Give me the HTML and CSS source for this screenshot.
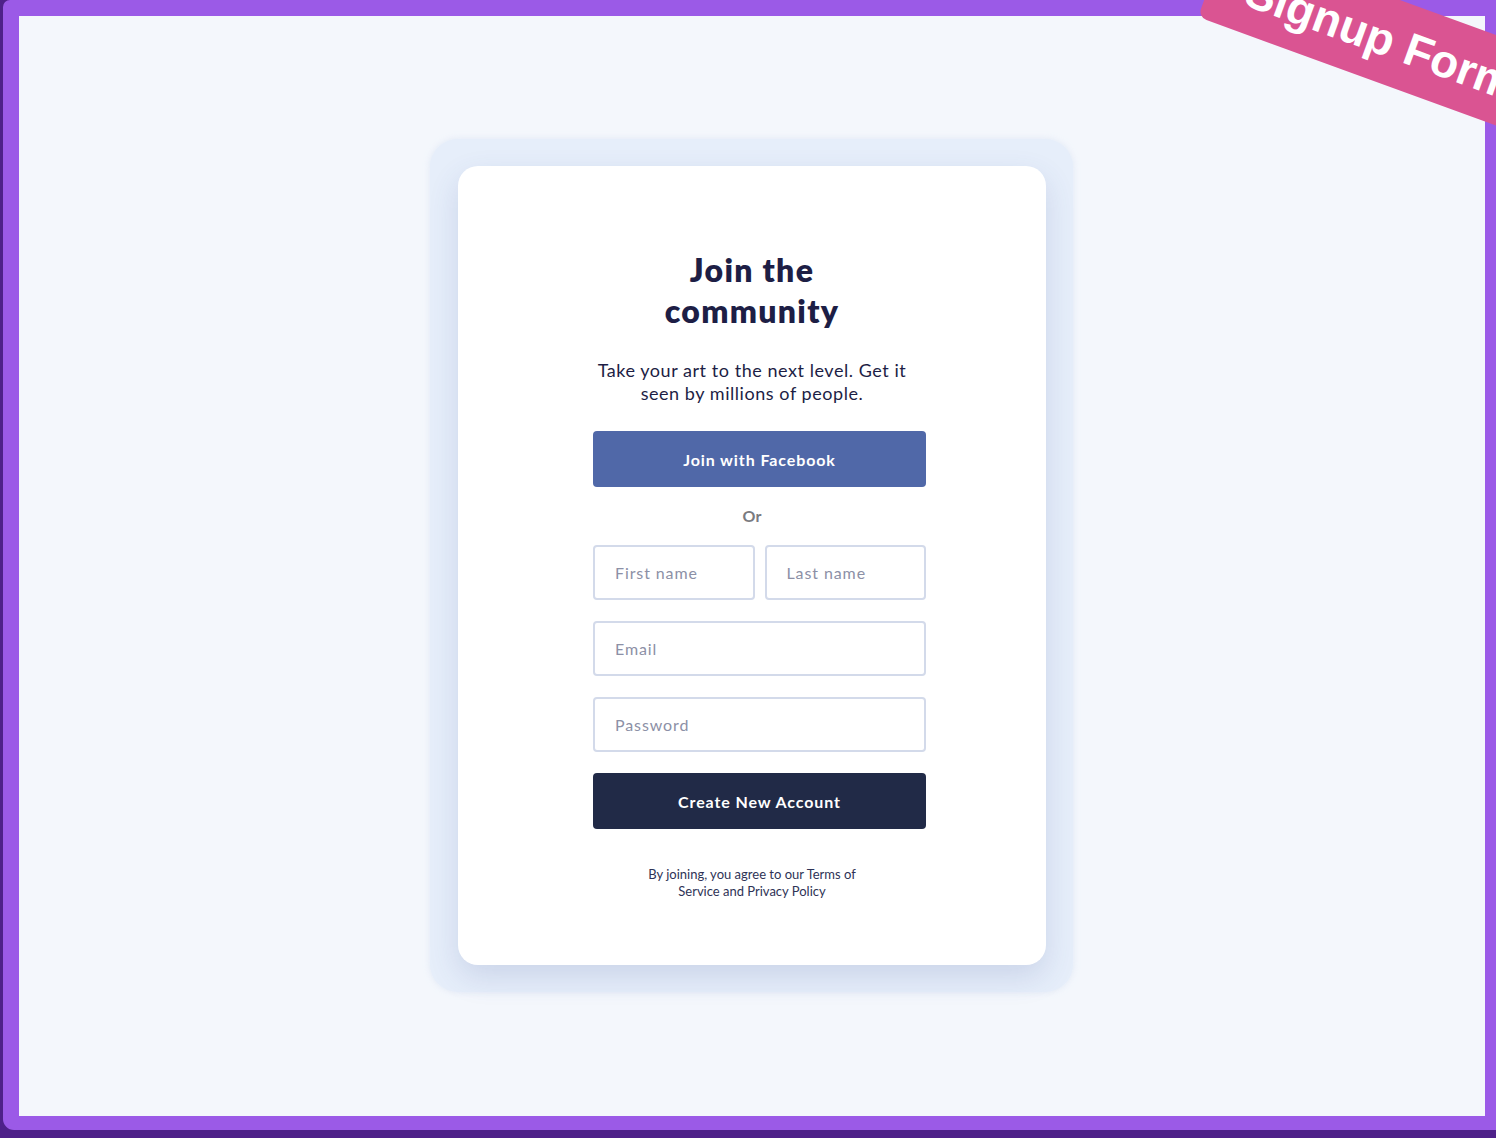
FILE: index.html
```html
<!DOCTYPE html>
<html lang="en">
<head>
<meta charset="utf-8">
<title>Signup Form</title>
<link rel="stylesheet" href="styles.css">
</head>
<body>
<div class="frame">
  <div class="ribbon"><span>Signup Form</span></div>
  <main class="stage">
    <div class="card-shell">
      <section class="card">
        <h1 class="title">Join the<br>community</h1>
        <p class="lead">Take your art to the next level. Get it seen by millions of people.</p>
        <button class="btn btn-fb" type="button">Join with Facebook</button>
        <div class="or">Or</div>
        <form class="form">
          <div class="row">
            <input class="field" type="text" placeholder="First name">
            <input class="field" type="text" placeholder="Last name">
          </div>
          <input class="field" type="email" placeholder="Email">
          <input class="field" type="password" placeholder="Password">
          <button class="btn btn-dark" type="button">Create New Account</button>
        </form>
        <p class="legal">By joining, you agree to our Terms of Service and Privacy Policy</p>
      </section>
    </div>
  </main>
</div>
</body>
</html>
```
FILE: styles.css
```css
* { box-sizing: border-box; }
html, body { margin: 0; padding: 0; overflow: hidden; }
body {
  background: #4e2189;
  width: 1496px;
  height: 1138px;
  font-family: Lato, "Open Sans", sans-serif;
}
.frame {
  position: relative;
  overflow: hidden;
  margin-left: 3px;
  height: 1130px;
  background: #9b5ae7;
  border-radius: 7px 0 0 11px;
  padding: 16px 11px 14px 16px;
}
.stage {
  height: 1100px;
  background: #f4f7fc;
  display: flex;
  align-items: flex-start;
  padding: 123px 0 0 411px;
}
.ribbon {
  position: absolute;
  left: 1195px;
  top: -68px;
  width: 480px;
  height: 85px;
  background: #da5492;
  border-radius: 9px;
  transform-origin: 0 100%;
  transform: rotate(20deg);
  display: flex;
  align-items: flex-end;
  padding: 0 0 20px 37px;
  z-index: 5;
}
.ribbon span {
  color: #fff;
  font-family: "Liberation Sans", Arial, sans-serif;
  font-weight: 700;
  font-size: 46px;
  line-height: 46px;
  white-space: nowrap;
}
.card-shell {
  width: 643px;
  height: 853px;
  padding: 27px 28px 27px 28px;
  background: #e6eefa;
  border-radius: 28px;
  box-shadow: 0 0 6px rgba(210, 222, 242, 0.6);
}
.card {
  width: 588px;
  height: 799px;
  background: #fff;
  border-radius: 20px;
  box-shadow: 0 12px 30px rgba(60, 80, 150, 0.16);
  padding: 83px 120px 0 135px;
  display: flex;
  flex-direction: column;
  align-items: stretch;
  text-align: center;
}
.title {
  margin: 0 0 0 -15px;
  font-size: 32px;
  line-height: 41px;
  font-weight: 800;
  color: #1d1e45;
  letter-spacing: 1.3px;
}
.lead {
  margin: 28px auto 0;
  width: 330px;
  position: relative;
  left: -7.5px;
  font-size: 18px;
  line-height: 23px;
  color: #1d1e45;
  letter-spacing: 0.55px;
}
.btn {
  display: block;
  width: 100%;
  height: 56px;
  border: 0;
  border-radius: 4px;
  color: #fff;
  font-family: inherit;
  font-weight: 700;
  font-size: 16px;
  letter-spacing: 0.9px;
  cursor: pointer;
}
.btn-fb {
  margin-top: 26px;
  background: #5068a8;
}
.btn-dark {
  background: #212a47;
}
.or {
  margin: 19px 0 19px -15px;
  font-size: 16px;
  line-height: 20px;
  font-weight: 700;
  color: #7a7b80;
}
.form {
  display: flex;
  flex-direction: column;
  gap: 21px;
  margin: 0;
}
.row {
  display: flex;
  gap: 10px;
}
.row .field { flex: 1 1 0; min-width: 0; }
.field {
  width: 100%;
  height: 55px;
  border: 2px solid #d3daea;
  border-radius: 4px;
  padding: 0 20px;
  font-family: inherit;
  font-size: 16px;
  color: #1d1e45;
  background: #fff;
  letter-spacing: 0.9px;
}
.field::placeholder { color: #8c90a6; }
.legal {
  margin: 37px auto 0;
  width: 230px;
  position: relative;
  left: -7.5px;
  font-size: 13px;
  line-height: 16.5px;
  color: #2e3356;
}
```
